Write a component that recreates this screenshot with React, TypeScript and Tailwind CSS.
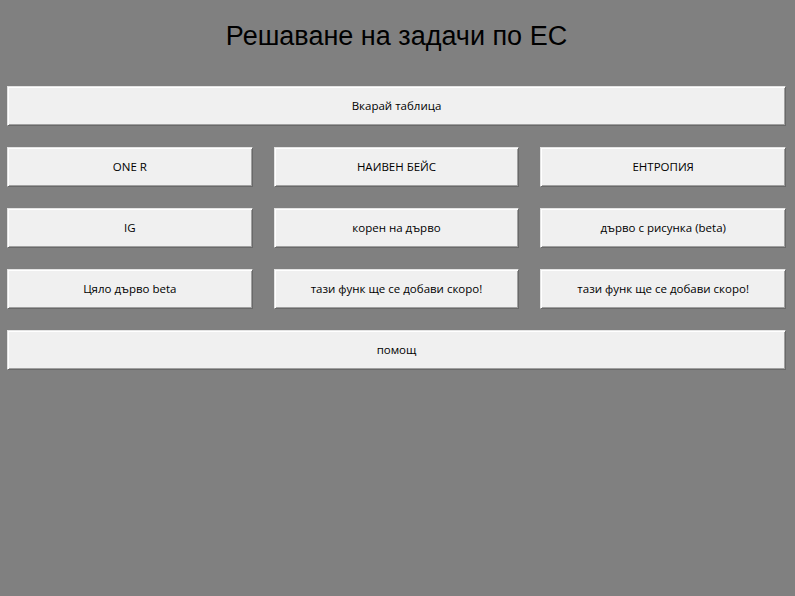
import React from 'react';

const ROWS: string[][] = [
  ['ONE R', 'НАИВЕН БЕЙС', 'ЕНТРОПИЯ'],
  ['IG', 'корен на дърво', 'дърво с рисунка (beta)'],
  ['Цяло дърво beta', 'тази функ ще се добави скоро!', 'тази функ ще се добави скоро!'],
];

function TkButton({ label }: { label: string }) {
  return (
    <button
      type="button"
      className="h-[40px] w-full flex items-center justify-center bg-[#f0f0f0] text-black text-[11.5px] border border-t-[#e3e3e3] border-l-[#e3e3e3] border-r-[#696969] border-b-[#696969] shadow-[inset_1px_1px_0_#ffffff,inset_-1px_-1px_0_#a0a0a0]"
      style={{ fontFamily: '"Open Sans", "Noto Sans", sans-serif' }}
    >
      {label}
    </button>
  );
}

export default function App() {
  return (
    <div className="w-[795px] h-[596px] bg-[#808080] pl-[7px] pr-[9px] pt-[21px]">
      <h1
        className="h-[30px] leading-[30px] text-center text-[27px] text-black mb-[35px]"
        style={{ fontFamily: '"Liberation Sans", Arial, sans-serif' }}
      >
        Решаване на задачи по ЕС
      </h1>

      <div className="flex flex-col gap-[21px]">
        <TkButton label="Вкарай таблица" />
        {ROWS.map((row, i) => (
          <div key={i} className="grid grid-cols-3 gap-[21px]">
            {row.map((l, j) => (
              <TkButton key={j} label={l} />
            ))}
          </div>
        ))}
        <TkButton label="помощ" />
      </div>
    </div>
  );
}
